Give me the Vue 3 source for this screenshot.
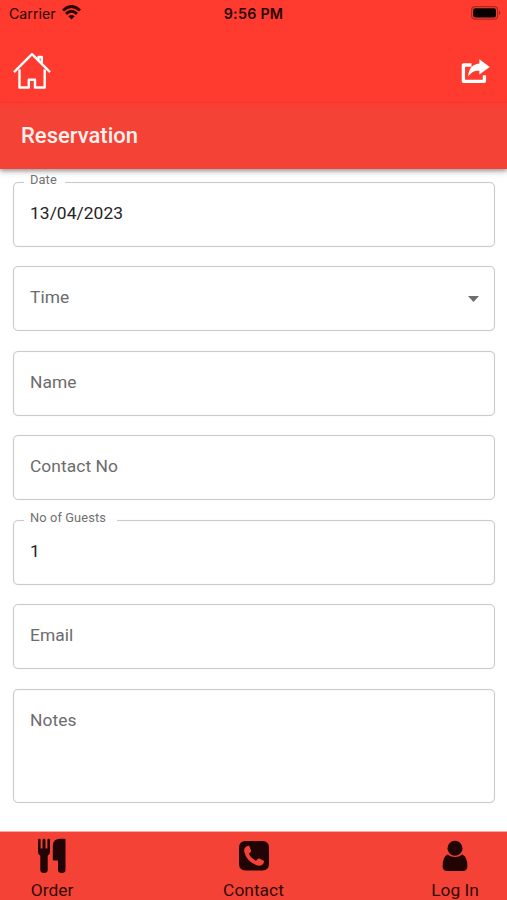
<script setup>
const fields = [
  { label: 'Date', value: '13/04/2023', notch: 'date' },
  { label: 'Time', select: true },
  { label: 'Name' },
  { label: 'Contact No' },
  { label: 'No of Guests', value: '1', notch: 'guests' },
  { label: 'Email' },
  { label: 'Notes', tall: true }
]
</script>

<template>
  <div class="screen">
    <header class="top">
      <div class="status">
        <div class="carrier">
          <span>Carrier</span>
          <svg class="wifi" width="19" height="15" viewBox="0 0 18 14">
            <g fill="none" stroke="#280504" stroke-width="2.700">
              <path d="M.9 5.1Q9-2.6 17.1 5.1" />
              <path d="M3.8 8.3Q9 3.5 14.2 8.3" />
            </g>
            <path d="M6 10.6Q9 8 12 10.6L9 13.6Z" fill="#280504" />
          </svg>
        </div>
        <span class="clock">9:56 PM</span>
        <svg class="battery" width="31" height="14" viewBox="0 0 31 14">
          <rect x=".6" y=".6" width="26" height="12.600" rx="3.500" fill="none" stroke="#a92a22" stroke-width="1.200" />
          <rect x="2.200" y="2.200" width="22.800" height="9.400" rx="2" fill="#0b0000" />
          <path d="M28.200 4.700q2.200 2.100 0 4.400z" fill="#8e211c" />
        </svg>
      </div>
      <div class="actions">
        <svg width="38" height="38" viewBox="0 0 38 38" fill="none" stroke="#fff" stroke-width="2.400" stroke-linejoin="round">
          <path d="M1 20.200 19 2.200 37 20.200" />
          <path d="M25.500 8.500V5h3.300v7" />
          <path d="M6.500 17.500v18h9.300v-7.800h6.200v7.800h9.700v-18" />
        </svg>
        <svg class="share" width="29" height="25" viewBox="0 0 29 25">
          <path d="M10.500 6H2.400v16.300h21v-6" fill="none" stroke="#fff" stroke-width="3.300" stroke-linejoin="round" />
          <path d="M18.400.3 28.700 7.900 18.400 15.500V11.700C13 11.500 10.500 13.200 7.200 17.400 7.600 9.700 11.500 5.200 18.400 4.600Z" fill="#fff" />
        </svg>
      </div>
    </header>
    <h1 class="title">Reservation</h1>

    <main class="form">
      <fieldset v-for="f in fields" :key="f.label" class="field" :class="{ tall: f.tall }">
        <legend v-if="f.notch" class="legend" :class="f.notch">{{ f.label }}</legend>
        <div class="control">
          <span v-if="f.value" class="value">{{ f.value }}</span>
          <span v-else class="label">{{ f.label }}</span>
          <svg v-if="f.select" class="caret" width="11" height="6" viewBox="0 0 11 6"><path d="M0 0h11L5.500 6z" fill="#6d6d6d" /></svg>
        </div>
      </fieldset>
    </main>

    <nav class="tabs">
      <div class="tab">
        <svg width="30" height="36" viewBox="0 0 30 36" fill="#210403">
          <path d="M1 2Q1 .7 2.300.7T3.600 2V10.500H5.500V2Q5.500.7 7 .7T8.500 2V10.500H10.400V2Q10.400.7 11.700.7T13 2V14Q13 16.800 10.700 17.700V32Q10.700 35 7 35T3.300 32V17.700Q1 16.800 1 14Z" />
          <path d="M28.500 1.500V31.700Q28.500 35 24.700 35 21 35 21 31.700V22.500H16.800Q15.800 22.500 15.800 21.500V8Q15.800.700 23.500.700H27.500Q28.500.700 28.500 1.500Z" />
        </svg>
        <span>Order</span>
      </div>
      <div class="tab">
        <svg width="30" height="36" viewBox="0 0 30 36">
          <rect y="3" width="30" height="29.500" rx="6" fill="#210403" />
          <path d="M9.200 7.800Q4.700 9.200 5.200 13.500 7.500 24.200 19.500 27.700 23.800 28 25 24 25.200 23 24.300 22.400L20.400 20.500Q19.400 20.100 18.700 21L17.100 22.800Q12 20.200 9.900 15.800L11.500 14.200Q12.300 13.400 12 12.400L10.500 8.500Q10.100 7.600 9.200 7.800Z" fill="#f44336" />
        </svg>
        <span>Contact</span>
      </div>
      <div class="tab">
        <svg width="30" height="36" viewBox="0 0 30 36" fill="#210403">
          <circle cx="15" cy="10.200" r="7.500" />
          <path d="M7.700 16.500Q2.600 18.500 2.600 28.200 2.600 33 7.200 33H22.800Q27.400 33 27.400 28.200 27.400 18.500 22.300 16.500 19 19 15 19T7.700 16.500Z" />
        </svg>
        <span>Log In</span>
      </div>
    </nav>
  </div>
</template>

<style>
body { margin: 0; background: #fff; }
</style>

<style scoped>
.screen {
  width: 507px;
  height: 900px;
  overflow: hidden;
  display: flex;
  flex-direction: column;
  background: #fff;
  font-family: Roboto, "Liberation Sans", sans-serif;
}
.top {
  height: 103px;
  flex: none;
  background: #ff3b30;
}
.status {
  height: 28px;
  display: grid;
  grid-template-columns: 1fr auto 1fr;
  align-items: center;
  padding: 0 5px 0 9px;
  box-sizing: border-box;
  font-family: Inter, sans-serif;
  color: #280504;
}
.carrier { display: flex; align-items: center; gap: 6px; font-size: 14.200px; line-height: 28px; }
.wifi { margin-bottom: 3px; }
.clock { font-size: 14.300px; font-weight: 600; letter-spacing: .25px; position: relative; left: -2px; top: -1px; }
.battery { justify-self: end; margin-bottom: 2px; }
.actions {
  display: flex;
  justify-content: space-between;
  align-items: flex-start;
  padding: 24px 17px 0 12.500px;
}
.share { margin-top: 7px; }
.title {
  height: 66px;
  flex: none;
  margin: 0;
  padding-left: 21px;
  position: relative;
  background: linear-gradient(#ff3b30, #f44336 5px);
  box-shadow: 0 2px 4px rgba(0, 0, 0, .32), 0 4px 7px rgba(0, 0, 0, .1);
  color: #fff1ee;
  font-size: 22px;
  line-height: 65px;
  font-weight: 500;
}
.form {
  flex: 1;
  display: flex;
  flex-direction: column;
  gap: 19.500px;
  padding: 12.500px 12px 0 13px;
}
.field {
  height: 65px;
  flex: none;
  box-sizing: border-box;
  min-width: 0;
  margin: 0;
  padding: 0 16px;
  border: 1px solid #cacaca;
  border-radius: 5px;
  box-shadow: 0 0 1px rgba(0, 0, 0, .15), inset 0 0 1px rgba(0, 0, 0, .12);
  font-size: 17.400px;
  letter-spacing: .05px;
}
.control {
  height: 60px;
  display: flex;
  justify-content: space-between;
  align-items: center;
}
.label { color: #6c6c6c; }
.value { color: #242424; }
.tall { height: 114px; }
.legend {
  height: 1px;
  line-height: 1px;
  margin-left: -6px;
  padding: 0 0 0 6px;
  box-sizing: border-box;
  font-size: 12.800px;
  letter-spacing: .12px;
  color: #707070;
  white-space: nowrap;
  position: relative;
  top: -3px;
}
.date { width: 41px; }
.guests { width: 93px; }
.caret { margin: 4px -1px 0 0; }
.tabs {
  height: 69px;
  flex: none;
  box-sizing: border-box;
  display: flex;
  justify-content: space-between;
  padding: 6px 21px 0;
  border-top: 1px solid #f8aaa3;
  background: #f44336;
}
.tab {
  width: 62px;
  display: flex;
  flex-direction: column;
  align-items: center;
  font-size: 17.400px;
  line-height: 20px;
  color: #320a07;
  white-space: nowrap;
}
.tab span { margin-top: 6px; }
</style>
